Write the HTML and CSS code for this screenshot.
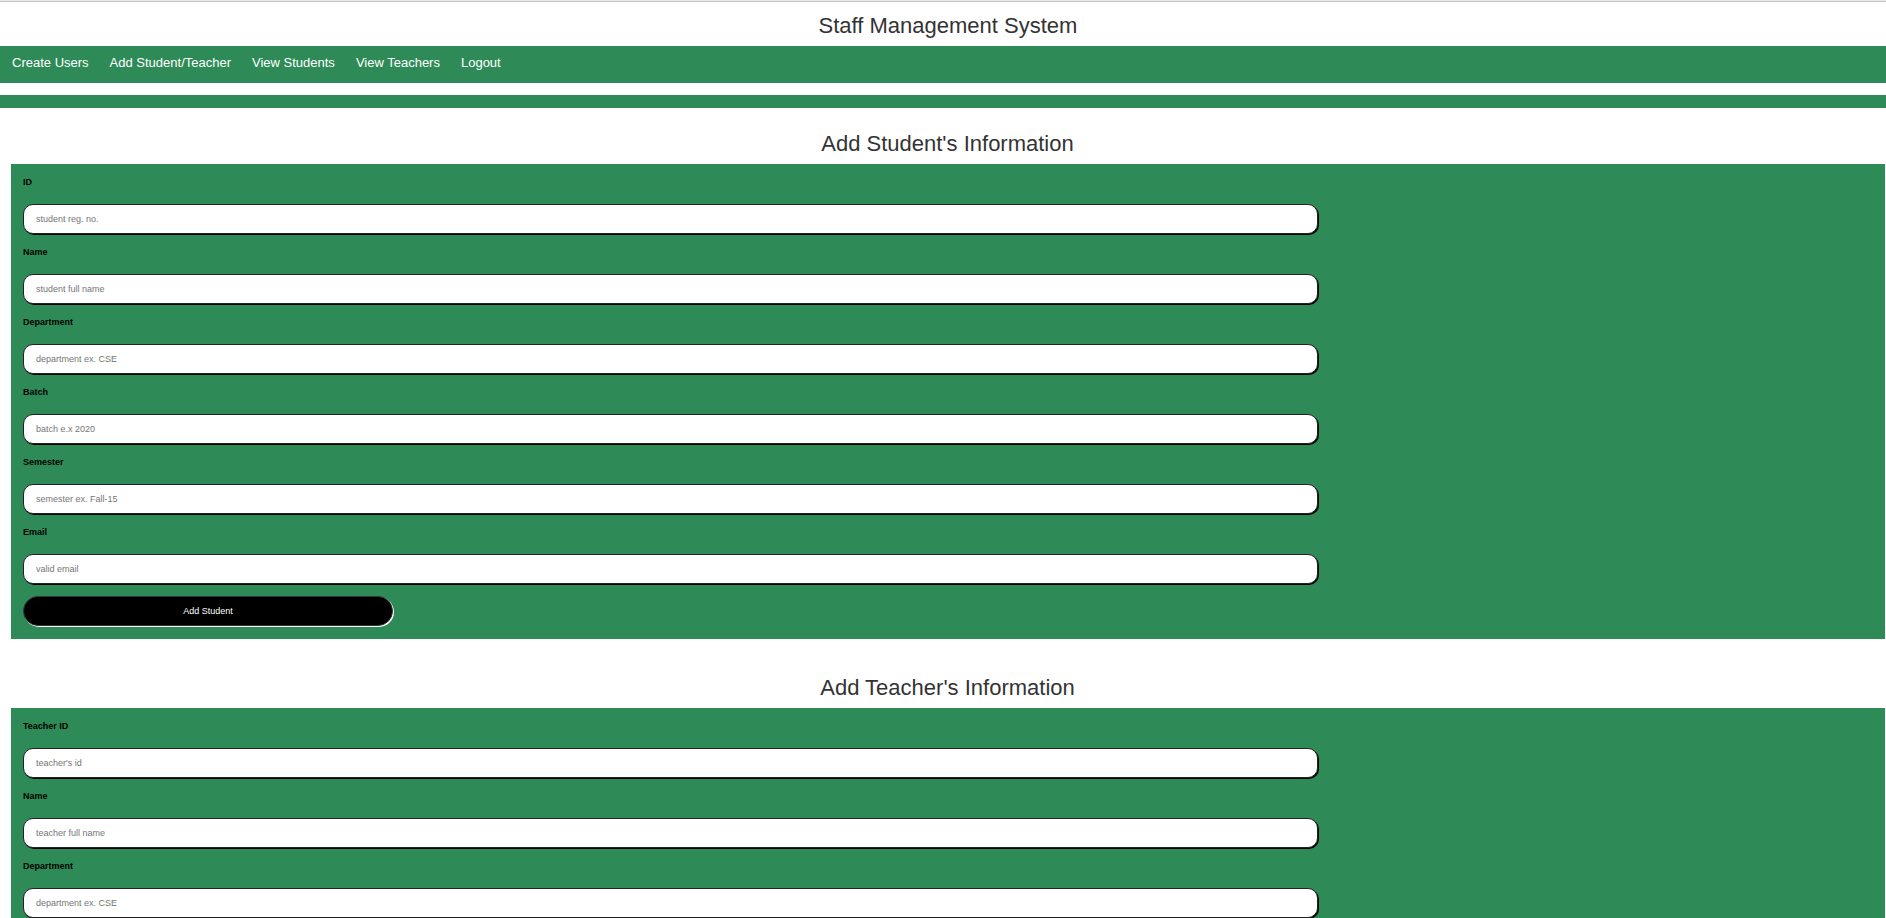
FILE: index.html
```html
<!DOCTYPE html>
<html lang="en">
<head>
<meta charset="utf-8">
<title>Staff Management System</title>
<link rel="stylesheet" href="styles.css">
</head>
<body>
<header class="site-header">
  <h1 class="heading">Staff Management System</h1>
</header>
<nav class="nav">
  <a href="#">Create Users</a>
  <a href="#">Add Student/Teacher</a>
  <a href="#">View Students</a>
  <a href="#">View Teachers</a>
  <a href="#">Logout</a>
</nav>
<div class="strip"></div>
<main class="content">
  <section class="section">
    <h2 class="heading">Add Student's Information</h2>
    <form class="form">
      <label for="s-id">ID</label>
      <input id="s-id" type="text" placeholder="student reg. no.">
      <label for="s-name">Name</label>
      <input id="s-name" type="text" placeholder="student full name">
      <label for="s-dept">Department</label>
      <input id="s-dept" type="text" placeholder="department ex. CSE">
      <label for="s-batch">Batch</label>
      <input id="s-batch" type="text" placeholder="batch e.x 2020">
      <label for="s-sem">Semester</label>
      <input id="s-sem" type="text" placeholder="semester ex. Fall-15">
      <label for="s-email">Email</label>
      <input id="s-email" type="email" placeholder="valid email">
      <button type="submit">Add Student</button>
    </form>
  </section>
  <section class="section">
    <h2 class="heading">Add Teacher's Information</h2>
    <form class="form">
      <label for="t-id">Teacher ID</label>
      <input id="t-id" type="text" placeholder="teacher's id">
      <label for="t-name">Name</label>
      <input id="t-name" type="text" placeholder="teacher full name">
      <label for="t-dept">Department</label>
      <input id="t-dept" type="text" placeholder="department ex. CSE">
    </form>
  </section>
</main>
</body>
</html>
```
FILE: styles.css
```css
* {
  box-sizing: border-box;
}

html {
  scrollbar-width: none;
}

body {
  margin: 0;
  background: #fff;
  font-family: "Liberation Sans", Arial, sans-serif;
}

.heading {
  margin: 0;
  color: #333;
  font-size: 22px;
  font-weight: 400;
  line-height: 26px;
  text-align: center;
}

.site-header {
  padding: 12px 0 7px 10px;
  border-top: 1px solid #e8e8e8;
  box-shadow: inset 0 1px #c4c4c4;
}

.nav {
  display: flex;
  gap: 21px;
  padding: 9px 12px 12px;
  background: seagreen;
}

.nav a {
  color: #fff;
  font-size: 13px;
  line-height: 16px;
  text-decoration: none;
}

.strip {
  height: 13px;
  margin-top: 12px;
  background: seagreen;
}

.content {
  padding: 23px 1px 0 10px;
}

.section {
  margin-bottom: 36px;
}

.form {
  display: flex;
  flex-direction: column;
  align-items: flex-start;
  margin: 7px 0 0 1px;
  padding: 12px 12px 13px;
  background: seagreen;
}

.form label {
  margin-bottom: 15px;
  color: #000;
  font-size: 9px;
  font-weight: 700;
  line-height: 13px;
}

.form input {
  width: 70%;
  height: 30px;
  margin-bottom: 12px;
  padding: 0 12px;
  border: 1px solid #222;
  border-radius: 10px;
  background: #fff;
  box-shadow: 1px 1px #000;
  font-family: inherit;
  font-size: 9px;
}

.form input::placeholder {
  color: #757575;
}

.form button {
  width: 20%;
  height: 30px;
  padding: 0;
  border: 1px solid #333;
  border-radius: 15px;
  background: #000;
  box-shadow: 1px 1px #fff;
  color: #fff;
  font-family: inherit;
  font-size: 9px;
}
```
